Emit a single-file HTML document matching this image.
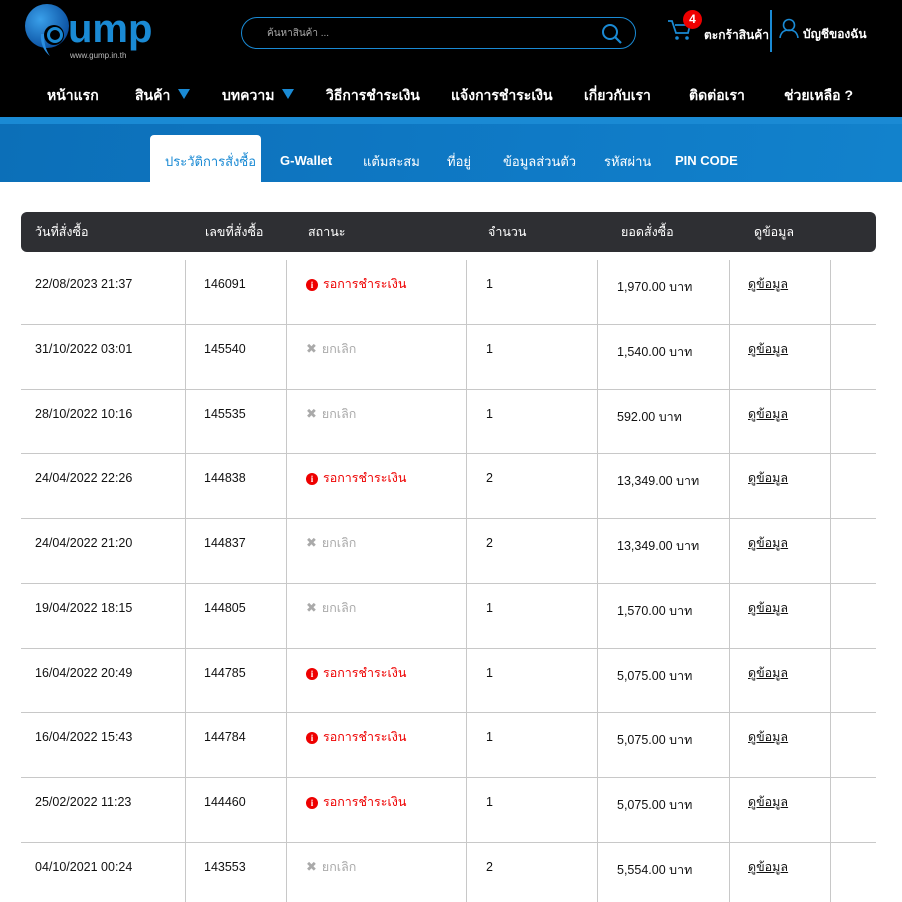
<!DOCTYPE html>
<html><head><meta charset="utf-8">
<style>
*{margin:0;padding:0;box-sizing:border-box}
body{width:902px;height:902px;overflow:hidden;background:#fff;font-family:"Liberation Sans","DejaVu Sans",sans-serif;position:relative;color:#111}
.hdr{position:absolute;left:0;top:0;width:902px;height:117px;background:#000}
.abs{position:absolute;white-space:nowrap}
.nav{color:#fff;font-size:14px;font-weight:bold;top:85px}
.tri{display:inline-block;width:0;height:0;border-left:6px solid transparent;border-right:6px solid transparent;border-top:10px solid #1a8ad4;margin-left:8px;vertical-align:1px}
.stripe{position:absolute;left:0;top:117px;width:902px;height:7px;background:#1a8ad4}
.band{position:absolute;left:0;top:124px;width:902px;height:58px;background:linear-gradient(100deg,#0c6fb8 0%,#0f7ac6 60%,#1282cc 100%)}
.tab{color:#fff;font-size:13px;top:151px}
.th{position:absolute;left:21px;top:212px;width:855px;height:40px;background:#2e2f33;border-radius:6px}
.th span{position:absolute;top:10px;color:#fff;font-size:12.5px}
.hl{position:absolute;left:21px;width:855px;height:1px;background:#c8c8c8}
.vl{position:absolute;top:260px;width:1px;height:642px;background:#c8c8c8}
.c{position:absolute;font-size:12.5px;color:#111;margin-top:1px}
.red,.gray,.lk{margin-top:-2px}
.red{color:#e00;}
.gray{color:#aaa}
.ic{display:inline-block;width:12px;height:12px;border-radius:50%;background:#e00;color:#fff;font-size:9px;font-weight:bold;text-align:center;line-height:12px;margin-right:5px;vertical-align:0px;font-family:"Liberation Serif",serif}
.x{display:inline-block;font-weight:bold;margin-right:5px;color:#aaa;font-size:13px}
u{text-decoration:underline}
</style></head><body>
<div class="hdr"></div>
<svg class="abs" style="left:22px;top:2px" width="135" height="60" viewBox="0 0 135 60">
<defs><radialGradient id="g" cx="0.35" cy="0.35" r="0.7"><stop offset="0" stop-color="#3aa0ea"/><stop offset="1" stop-color="#0a4fa0"/></radialGradient></defs>
<circle cx="25" cy="24" r="22" fill="url(#g)"/>
<circle cx="32" cy="33" r="10" fill="#000"/>
<path d="M22 32 Q22 46 28 54 Q18 46 19 32Z" fill="#2a8ee0"/>
<circle cx="33" cy="33" r="6.5" fill="none" stroke="#1a8ad4" stroke-width="3"/>
<text x="46" y="40" font-family="Liberation Sans" font-weight="bold" font-size="40" fill="#1a8ad4">ump</text>
<text x="48" y="56" font-family="Liberation Sans" font-size="8" fill="#bbb">www.gump.in.th</text>
</svg>
<div class="abs" style="left:241px;top:17px;width:395px;height:32px;border:1px solid #1a8ad4;border-radius:16px"></div>
<div class="abs" style="left:267px;top:26px;color:#aaa;font-size:10px">ค้นหาสินค้า ...</div>
<svg class="abs" style="left:601px;top:23px" width="22" height="22" viewBox="0 0 22 22"><circle cx="9" cy="9" r="7" fill="none" stroke="#1a8ad4" stroke-width="2"/><line x1="14" y1="14" x2="20" y2="20" stroke="#1a8ad4" stroke-width="2.2"/></svg>
<svg class="abs" style="left:667px;top:18px" width="26" height="24" viewBox="0 0 26 24"><path d="M1 3h4l4 12h12l2-8H8" fill="none" stroke="#1a8ad4" stroke-width="1.8"/><circle cx="10" cy="20" r="1.8" fill="#1a8ad4"/><circle cx="20" cy="20" r="1.8" fill="#1a8ad4"/></svg>
<div class="abs" style="left:683px;top:10px;width:19px;height:19px;border-radius:50%;background:#e00;color:#fff;font-size:12px;font-weight:bold;text-align:center;line-height:19px">4</div>
<div class="abs" style="left:704px;top:26px;color:#fff;font-size:12px;font-weight:bold">ตะกร้าสินค้า</div>
<div class="abs" style="left:770px;top:10px;width:1.5px;height:42px;background:#1a8ad4"></div>
<svg class="abs" style="left:779px;top:18px" width="20" height="20" viewBox="0 0 20 20"><circle cx="10" cy="7" r="5.5" fill="none" stroke="#1a8ad4" stroke-width="1.6"/><path d="M1 20 Q2 12 10 12 Q18 12 19 20" fill="none" stroke="#1a8ad4" stroke-width="1.6"/></svg>
<div class="abs" style="left:803px;top:25px;color:#fff;font-size:12px;font-weight:bold">บัญชีของฉัน</div>
<div class="abs nav" style="left:47px">หน้าแรก</div>
<div class="abs nav" style="left:135px">สินค้า<span class="tri"></span></div>
<div class="abs nav" style="left:222px">บทความ<span class="tri"></span></div>
<div class="abs nav" style="left:326px">วิธีการชำระเงิน</div>
<div class="abs nav" style="left:451px">แจ้งการชำระเงิน</div>
<div class="abs nav" style="left:584px">เกี่ยวกับเรา</div>
<div class="abs nav" style="left:689px">ติดต่อเรา</div>
<div class="abs nav" style="left:784px">ช่วยเหลือ ?</div>
<div class="stripe"></div>
<div class="band"></div>
<div class="abs" style="left:150px;top:135px;width:111px;height:47px;background:#fff;border-radius:4px 4px 0 0"></div>
<div class="abs tab" style="left:165px;color:#1a8ad4">ประวัติการสั่งซื้อ</div>
<div class="abs tab" style="left:280px;font-weight:bold;top:153px">G-Wallet</div>
<div class="abs tab" style="left:363px">แต้มสะสม</div>
<div class="abs tab" style="left:447px">ที่อยู่</div>
<div class="abs tab" style="left:503px">ข้อมูลส่วนตัว</div>
<div class="abs tab" style="left:604px">รหัสผ่าน</div>
<div class="abs tab" style="left:675px;font-weight:bold;top:153px">PIN CODE</div>
<div class="th">
<span style="left:14px">วันที่สั่งซื้อ</span>
<span style="left:184px">เลขที่สั่งซื้อ</span>
<span style="left:287px">สถานะ</span>
<span style="left:467px">จำนวน</span>
<span style="left:600px">ยอดสั่งซื้อ</span>
<span style="left:733px">ดูข้อมูล</span>
</div>
<div class="vl" style="left:185px"></div>
<div class="vl" style="left:286px"></div>
<div class="vl" style="left:466px"></div>
<div class="vl" style="left:597px"></div>
<div class="vl" style="left:729px"></div>
<div class="vl" style="left:830px"></div>
<div class="hl" style="top:324px"></div><div class="hl" style="top:389px"></div><div class="hl" style="top:453px"></div><div class="hl" style="top:518px"></div><div class="hl" style="top:583px"></div><div class="hl" style="top:648px"></div><div class="hl" style="top:712px"></div><div class="hl" style="top:777px"></div><div class="hl" style="top:842px"></div>
<div class="c" style="left:35px;top:276px">22/08/2023 21:37</div><div class="c" style="left:204px;top:276px">146091</div><div class="c red" style="left:306px;top:276px"><span class="ic">i</span>รอการชำระเงิน</div><div class="c" style="left:486px;top:276px">1</div><div class="c" style="left:617px;top:276px">1,970.00 บาท</div><div class="c lk" style="left:748px;top:276px"><u>ดูข้อมูล</u></div>
<div class="c" style="left:35px;top:341px">31/10/2022 03:01</div><div class="c" style="left:204px;top:341px">145540</div><div class="c gray" style="left:306px;top:341px"><span class="x">✖</span>ยกเลิก</div><div class="c" style="left:486px;top:341px">1</div><div class="c" style="left:617px;top:341px">1,540.00 บาท</div><div class="c lk" style="left:748px;top:341px"><u>ดูข้อมูล</u></div>
<div class="c" style="left:35px;top:406px">28/10/2022 10:16</div><div class="c" style="left:204px;top:406px">145535</div><div class="c gray" style="left:306px;top:406px"><span class="x">✖</span>ยกเลิก</div><div class="c" style="left:486px;top:406px">1</div><div class="c" style="left:617px;top:406px">592.00 บาท</div><div class="c lk" style="left:748px;top:406px"><u>ดูข้อมูล</u></div>
<div class="c" style="left:35px;top:470px">24/04/2022 22:26</div><div class="c" style="left:204px;top:470px">144838</div><div class="c red" style="left:306px;top:470px"><span class="ic">i</span>รอการชำระเงิน</div><div class="c" style="left:486px;top:470px">2</div><div class="c" style="left:617px;top:470px">13,349.00 บาท</div><div class="c lk" style="left:748px;top:470px"><u>ดูข้อมูล</u></div>
<div class="c" style="left:35px;top:535px">24/04/2022 21:20</div><div class="c" style="left:204px;top:535px">144837</div><div class="c gray" style="left:306px;top:535px"><span class="x">✖</span>ยกเลิก</div><div class="c" style="left:486px;top:535px">2</div><div class="c" style="left:617px;top:535px">13,349.00 บาท</div><div class="c lk" style="left:748px;top:535px"><u>ดูข้อมูล</u></div>
<div class="c" style="left:35px;top:600px">19/04/2022 18:15</div><div class="c" style="left:204px;top:600px">144805</div><div class="c gray" style="left:306px;top:600px"><span class="x">✖</span>ยกเลิก</div><div class="c" style="left:486px;top:600px">1</div><div class="c" style="left:617px;top:600px">1,570.00 บาท</div><div class="c lk" style="left:748px;top:600px"><u>ดูข้อมูล</u></div>
<div class="c" style="left:35px;top:665px">16/04/2022 20:49</div><div class="c" style="left:204px;top:665px">144785</div><div class="c red" style="left:306px;top:665px"><span class="ic">i</span>รอการชำระเงิน</div><div class="c" style="left:486px;top:665px">1</div><div class="c" style="left:617px;top:665px">5,075.00 บาท</div><div class="c lk" style="left:748px;top:665px"><u>ดูข้อมูล</u></div>
<div class="c" style="left:35px;top:729px">16/04/2022 15:43</div><div class="c" style="left:204px;top:729px">144784</div><div class="c red" style="left:306px;top:729px"><span class="ic">i</span>รอการชำระเงิน</div><div class="c" style="left:486px;top:729px">1</div><div class="c" style="left:617px;top:729px">5,075.00 บาท</div><div class="c lk" style="left:748px;top:729px"><u>ดูข้อมูล</u></div>
<div class="c" style="left:35px;top:794px">25/02/2022 11:23</div><div class="c" style="left:204px;top:794px">144460</div><div class="c red" style="left:306px;top:794px"><span class="ic">i</span>รอการชำระเงิน</div><div class="c" style="left:486px;top:794px">1</div><div class="c" style="left:617px;top:794px">5,075.00 บาท</div><div class="c lk" style="left:748px;top:794px"><u>ดูข้อมูล</u></div>
<div class="c" style="left:35px;top:859px">04/10/2021 00:24</div><div class="c" style="left:204px;top:859px">143553</div><div class="c gray" style="left:306px;top:859px"><span class="x">✖</span>ยกเลิก</div><div class="c" style="left:486px;top:859px">2</div><div class="c" style="left:617px;top:859px">5,554.00 บาท</div><div class="c lk" style="left:748px;top:859px"><u>ดูข้อมูล</u></div>
</body></html>
